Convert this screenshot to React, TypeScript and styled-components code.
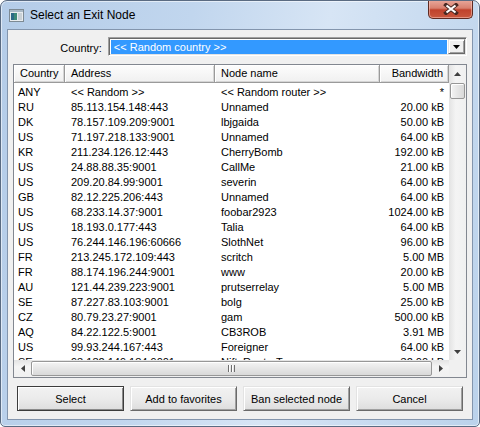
import React from 'react';
import styled, {createGlobalStyle} from 'styled-components';

type NodeRow = {
    country: string
    address: string
    name: string
    bandwidth: string
}

const nodes: NodeRow[] = [
    {country: 'ANY', address: '<< Random >>', name: '<< Random router >>', bandwidth: '*'},
    {country: 'RU', address: '85.113.154.148:443', name: 'Unnamed', bandwidth: '20.00 kB'},
    {country: 'DK', address: '78.157.109.209:9001', name: 'lbjgaida', bandwidth: '50.00 kB'},
    {country: 'US', address: '71.197.218.133:9001', name: 'Unnamed', bandwidth: '64.00 kB'},
    {country: 'KR', address: '211.234.126.12:443', name: 'CherryBomb', bandwidth: '192.00 kB'},
    {country: 'US', address: '24.88.88.35:9001', name: 'CallMe', bandwidth: '21.00 kB'},
    {country: 'US', address: '209.20.84.99:9001', name: 'severin', bandwidth: '64.00 kB'},
    {country: 'GB', address: '82.12.225.206:443', name: 'Unnamed', bandwidth: '64.00 kB'},
    {country: 'US', address: '68.233.14.37:9001', name: 'foobar2923', bandwidth: '1024.00 kB'},
    {country: 'US', address: '18.193.0.177:443', name: 'Talia', bandwidth: '64.00 kB'},
    {country: 'US', address: '76.244.146.196:60666', name: 'SlothNet', bandwidth: '96.00 kB'},
    {country: 'FR', address: '213.245.172.109:443', name: 'scritch', bandwidth: '5.00 MB'},
    {country: 'FR', address: '88.174.196.244:9001', name: 'www', bandwidth: '20.00 kB'},
    {country: 'AU', address: '121.44.239.223:9001', name: 'prutserrelay', bandwidth: '5.00 MB'},
    {country: 'SE', address: '87.227.83.103:9001', name: 'bolg', bandwidth: '25.00 kB'},
    {country: 'CZ', address: '80.79.23.27:9001', name: 'gam', bandwidth: '500.00 kB'},
    {country: 'AQ', address: '84.22.122.5:9001', name: 'CB3ROB', bandwidth: '3.91 MB'},
    {country: 'US', address: '99.93.244.167:443', name: 'Foreigner', bandwidth: '64.00 kB'},
    {country: 'SE', address: '93.182.149.184:9001', name: 'NiftyRouterTor', bandwidth: '32.00 kB'},
]

const GlobalStyle = createGlobalStyle`
  html, body {
    margin: 0;
    padding: 0;
    background: #fff;
  }
  body {
    font-family: "Liberation Sans", Arial, sans-serif;
    font-size: 11px;
    color: #000;
  }
`

const Window = styled.div`
  width: 480px;
  height: 427px;
  box-sizing: border-box;
  display: flex;
  flex-direction: column;
  border: 1px solid #5a6b82;
  border-radius: 7px 7px 5px 5px;
  background: linear-gradient(100deg, #b4cce8 0%, #c1d6ee 35%, #d7e5f5 60%, #c8dbf0 80%, #bbd2eb 100%);
  box-shadow: inset 0 0 0 1px rgba(255, 255, 255, 0.55);
  overflow: hidden;
`

const TitleBar = styled.div`
  height: 28px;
  flex: none;
  display: flex;
  align-items: flex-start;
  padding-left: 8px;
`

const TitleIcon = styled.svg`
  margin-top: 8px;
  flex: none;
`

const Title = styled.div`
  margin-left: 6px;
  margin-top: 7px;
  font-size: 12px;
  line-height: 15px;
  color: #000;
  flex: 1;
`

const CloseButton = styled.div`
  width: 45px;
  height: 19px;
  margin-top: -1px;
  margin-right: 6px;
  box-sizing: border-box;
  border: 1px solid #5e2a22;
  border-top: none;
  border-radius: 0 0 5px 5px;
  background: linear-gradient(#e9a99c 0%, #d8806f 45%, #c0422c 55%, #c9583f 100%);
  box-shadow: inset 0 0 0 1px rgba(255, 210, 200, 0.5);
  display: flex;
  align-items: center;
  justify-content: center;
`

const Client = styled.div`
  flex: 1;
  margin: 0 6px 6px 6px;
  border: 1px solid #8395ad;
  background: #f0f0f0;
  display: flex;
  flex-direction: column;
  padding: 7px 5px 0 5px;
`

const CountryRow = styled.div`
  display: flex;
  align-items: center;
  height: 19px;
`

const CountryLabel = styled.div`
  width: 89px;
  text-align: right;
  margin-right: 6px;
  padding-top: 3px;
`

const Combo = styled.div`
  width: 360px;
  height: 19px;
  box-sizing: border-box;
  border: 1px solid;
  border-color: #a0a0a0 #fff #fff #a0a0a0;
  box-shadow: inset 1px 1px #696969, inset -1px -1px #e3e3e3;
  background: #fff;
  padding: 1px;
  display: flex;
`

const ComboValue = styled.div`
  flex: 1;
  background: #3399ff;
  color: #fff;
  line-height: 15px;
  padding-left: 3px;
  margin: 1px 1px 0 1px;
`

const ComboButton = styled.div`
  width: 17px;
  box-sizing: border-box;
  background: #f0f0f0;
  border: 1px solid;
  border-color: #e3e3e3 #696969 #696969 #e3e3e3;
  box-shadow: inset 1px 1px #fff, inset -1px -1px #a0a0a0;
  display: flex;
  align-items: center;
  justify-content: center;
`

const List = styled.div`
  margin-top: 8px;
  height: 314px;
  box-sizing: border-box;
  border: 1px solid #828790;
  background: #fff;
  display: flex;
  flex-direction: column;
`

const ListMain = styled.div`
  flex: 1;
  display: flex;
  min-height: 0;
`

const ListContent = styled.div`
  flex: 1;
  display: flex;
  flex-direction: column;
  overflow: hidden;
`

const columns = '51px 150px 165px 69px'

const HeaderRow = styled.div`
  display: grid;
  grid-template-columns: ${columns};
  height: 18px;
  flex: none;
`

const HeaderCell = styled.div<{align?: 'left' | 'right'}>`
  box-sizing: border-box;
  background: linear-gradient(#fdfdfd, #f0f0f0);
  border-right: 1px solid #9a9a9a;
  border-bottom: 1px solid #9a9a9a;
  box-shadow: inset 1px 1px #fff, inset -1px -1px #d5d5d5;
  line-height: 17px;
  padding: 0 5px 0 6px;
  text-align: ${props => props.align ?? 'left'};
  white-space: nowrap;
  overflow: hidden;
`

const Body = styled.div`
  flex: 1;
  padding-top: 2px;
  overflow: hidden;
`

const Row = styled.div`
  display: grid;
  grid-template-columns: ${columns};
  height: 15px;
  line-height: 15px;
`

const Cell = styled.div<{align?: 'left' | 'right', first?: boolean}>`
  padding: 0 5px 0 ${props => props.first ? '4px' : '6px'};
  text-align: ${props => props.align ?? 'left'};
  white-space: nowrap;
  overflow: hidden;
`

const VScroll = styled.div`
  width: 17px;
  flex: none;
  display: flex;
  flex-direction: column;
  background: linear-gradient(90deg, #e3e3e3, #f4f4f4 40%, #f0f0f0);
`

const HRow = styled.div`
  height: 17px;
  flex: none;
  display: flex;
`

const HScroll = styled.div`
  flex: 1;
  display: flex;
  background: linear-gradient(#e3e3e3, #f4f4f4 40%, #f0f0f0);
`

const Corner = styled.div`
  width: 17px;
  background: #f0f0f0;
`

const ArrowBox = styled.div`
  width: 17px;
  height: 17px;
  flex: none;
  display: flex;
  align-items: center;
  justify-content: center;
`

const Track = styled.div`
  flex: 1;
`

const VThumb = styled.div`
  height: 16px;
  margin: 1px 1px 0 1px;
  box-sizing: border-box;
  border: 1px solid #979797;
  border-radius: 2px;
  background: linear-gradient(90deg, #f4f4f4, #e6e6e6 50%, #d9d9d9);
  box-shadow: inset 1px 1px #fff;
`

const HThumb = styled.div`
  flex: 1;
  margin: 1px 0;
  box-sizing: border-box;
  border: 1px solid #979797;
  border-radius: 2px;
  background: linear-gradient(#f4f4f4, #e6e6e6 50%, #d9d9d9);
  box-shadow: inset 1px 1px #fff;
  display: flex;
  align-items: center;
  justify-content: center;
`

const Grip = styled.div`
  width: 7px;
  height: 7px;
  background: repeating-linear-gradient(90deg, #6f6f6f 0 1px, #fff 1px 2px, transparent 2px 3px);
`

const ButtonRow = styled.div`
  display: grid;
  grid-template-columns: repeat(4, 1fr);
  gap: 6px;
  padding: 8px 4px 0 4px;
`

const DialogButton = styled.button<{isDefault?: boolean}>`
  height: 25px;
  box-sizing: border-box;
  font-family: "Liberation Sans", Arial, sans-serif;
  font-size: 11px;
  color: #000;
  padding: 0;
  background: linear-gradient(#f2f2f2, #ebebeb 50%, #dddddd);
  border: 1px solid;
  border-color: ${props => props.isDefault ? '#3c3c3c' : '#e3e3e3 #6a6a6a #6a6a6a #e3e3e3'};
  box-shadow: ${props => props.isDefault
          ? 'inset 1px 1px #fff, inset -1px -1px #8a8a8a, inset 0 0 0 1px #a0a0a0'
          : 'inset 1px 1px #fff, inset -1px -1px #a0a0a0'};
`

const Triangle = ({dir}: { dir: 'up' | 'down' | 'left' | 'right' }) => {
    const points = {
        up: '0,4 7,4 3.5,0',
        down: '0,0 7,0 3.5,4',
        left: '4,0 4,7 0,3.5',
        right: '0,0 0,7 4,3.5',
    }[dir]
    const vertical = dir === 'up' || dir === 'down'
    return (
        <svg width={vertical ? 7 : 4} height={vertical ? 4 : 7}>
            <polygon points={points} fill="#404040"/>
        </svg>
    )
}

export default function App() {
    return (
        <>
            <GlobalStyle/>
            <Window>
                <TitleBar>
                    <TitleIcon width="15" height="13" viewBox="0 0 15 13">
                        <rect x="0.5" y="0.5" width="14" height="12" fill="#e8ecef" stroke="#7d8a94"/>
                        <rect x="1" y="1" width="13" height="2" fill="#a9b9c6"/>
                        <rect x="2" y="4" width="6" height="7" fill="#3e8a78"/>
                        <rect x="2" y="4" width="3" height="7" fill="#2c6a86"/>
                        <rect x="9" y="4" width="4" height="7" fill="#c9d1d6"/>
                    </TitleIcon>
                    <Title>Select an Exit Node</Title>
                    <CloseButton>
                        <svg width="16" height="12" viewBox="0 0 16 12">
                            <path d="M3 2 L13 10 M13 2 L3 10" stroke="#4a2a24" strokeWidth="4" strokeLinecap="square"/>
                            <path d="M3.5 2.5 L12.5 9.5 M12.5 2.5 L3.5 9.5" stroke="#fff" strokeWidth="2.2"/>
                        </svg>
                    </CloseButton>
                </TitleBar>
                <Client>
                    <CountryRow>
                        <CountryLabel>Country:</CountryLabel>
                        <Combo>
                            <ComboValue>&lt;&lt; Random country &gt;&gt;</ComboValue>
                            <ComboButton>
                                <svg width="7" height="4">
                                    <polygon points="0,0 7,0 3.5,4" fill="#000"/>
                                </svg>
                            </ComboButton>
                        </Combo>
                    </CountryRow>
                    <List>
                        <ListMain>
                            <ListContent>
                                <HeaderRow>
                                    <HeaderCell>Country</HeaderCell>
                                    <HeaderCell>Address</HeaderCell>
                                    <HeaderCell>Node name</HeaderCell>
                                    <HeaderCell align="right">Bandwidth</HeaderCell>
                                </HeaderRow>
                                <Body>
                                    {nodes.map((node, i) => (
                                        <Row key={i}>
                                            <Cell first>{node.country}</Cell>
                                            <Cell>{node.address}</Cell>
                                            <Cell>{node.name}</Cell>
                                            <Cell align="right">{node.bandwidth}</Cell>
                                        </Row>
                                    ))}
                                </Body>
                            </ListContent>
                            <VScroll>
                                <ArrowBox><Triangle dir="up"/></ArrowBox>
                                <VThumb/>
                                <Track/>
                                <ArrowBox><Triangle dir="down"/></ArrowBox>
                            </VScroll>
                        </ListMain>
                        <HRow>
                            <HScroll>
                                <ArrowBox><Triangle dir="left"/></ArrowBox>
                                <HThumb><Grip/></HThumb>
                                <ArrowBox><Triangle dir="right"/></ArrowBox>
                            </HScroll>
                            <Corner/>
                        </HRow>
                    </List>
                    <ButtonRow>
                        <DialogButton isDefault>Select</DialogButton>
                        <DialogButton>Add to favorites</DialogButton>
                        <DialogButton>Ban selected node</DialogButton>
                        <DialogButton>Cancel</DialogButton>
                    </ButtonRow>
                </Client>
            </Window>
        </>
    );
}
